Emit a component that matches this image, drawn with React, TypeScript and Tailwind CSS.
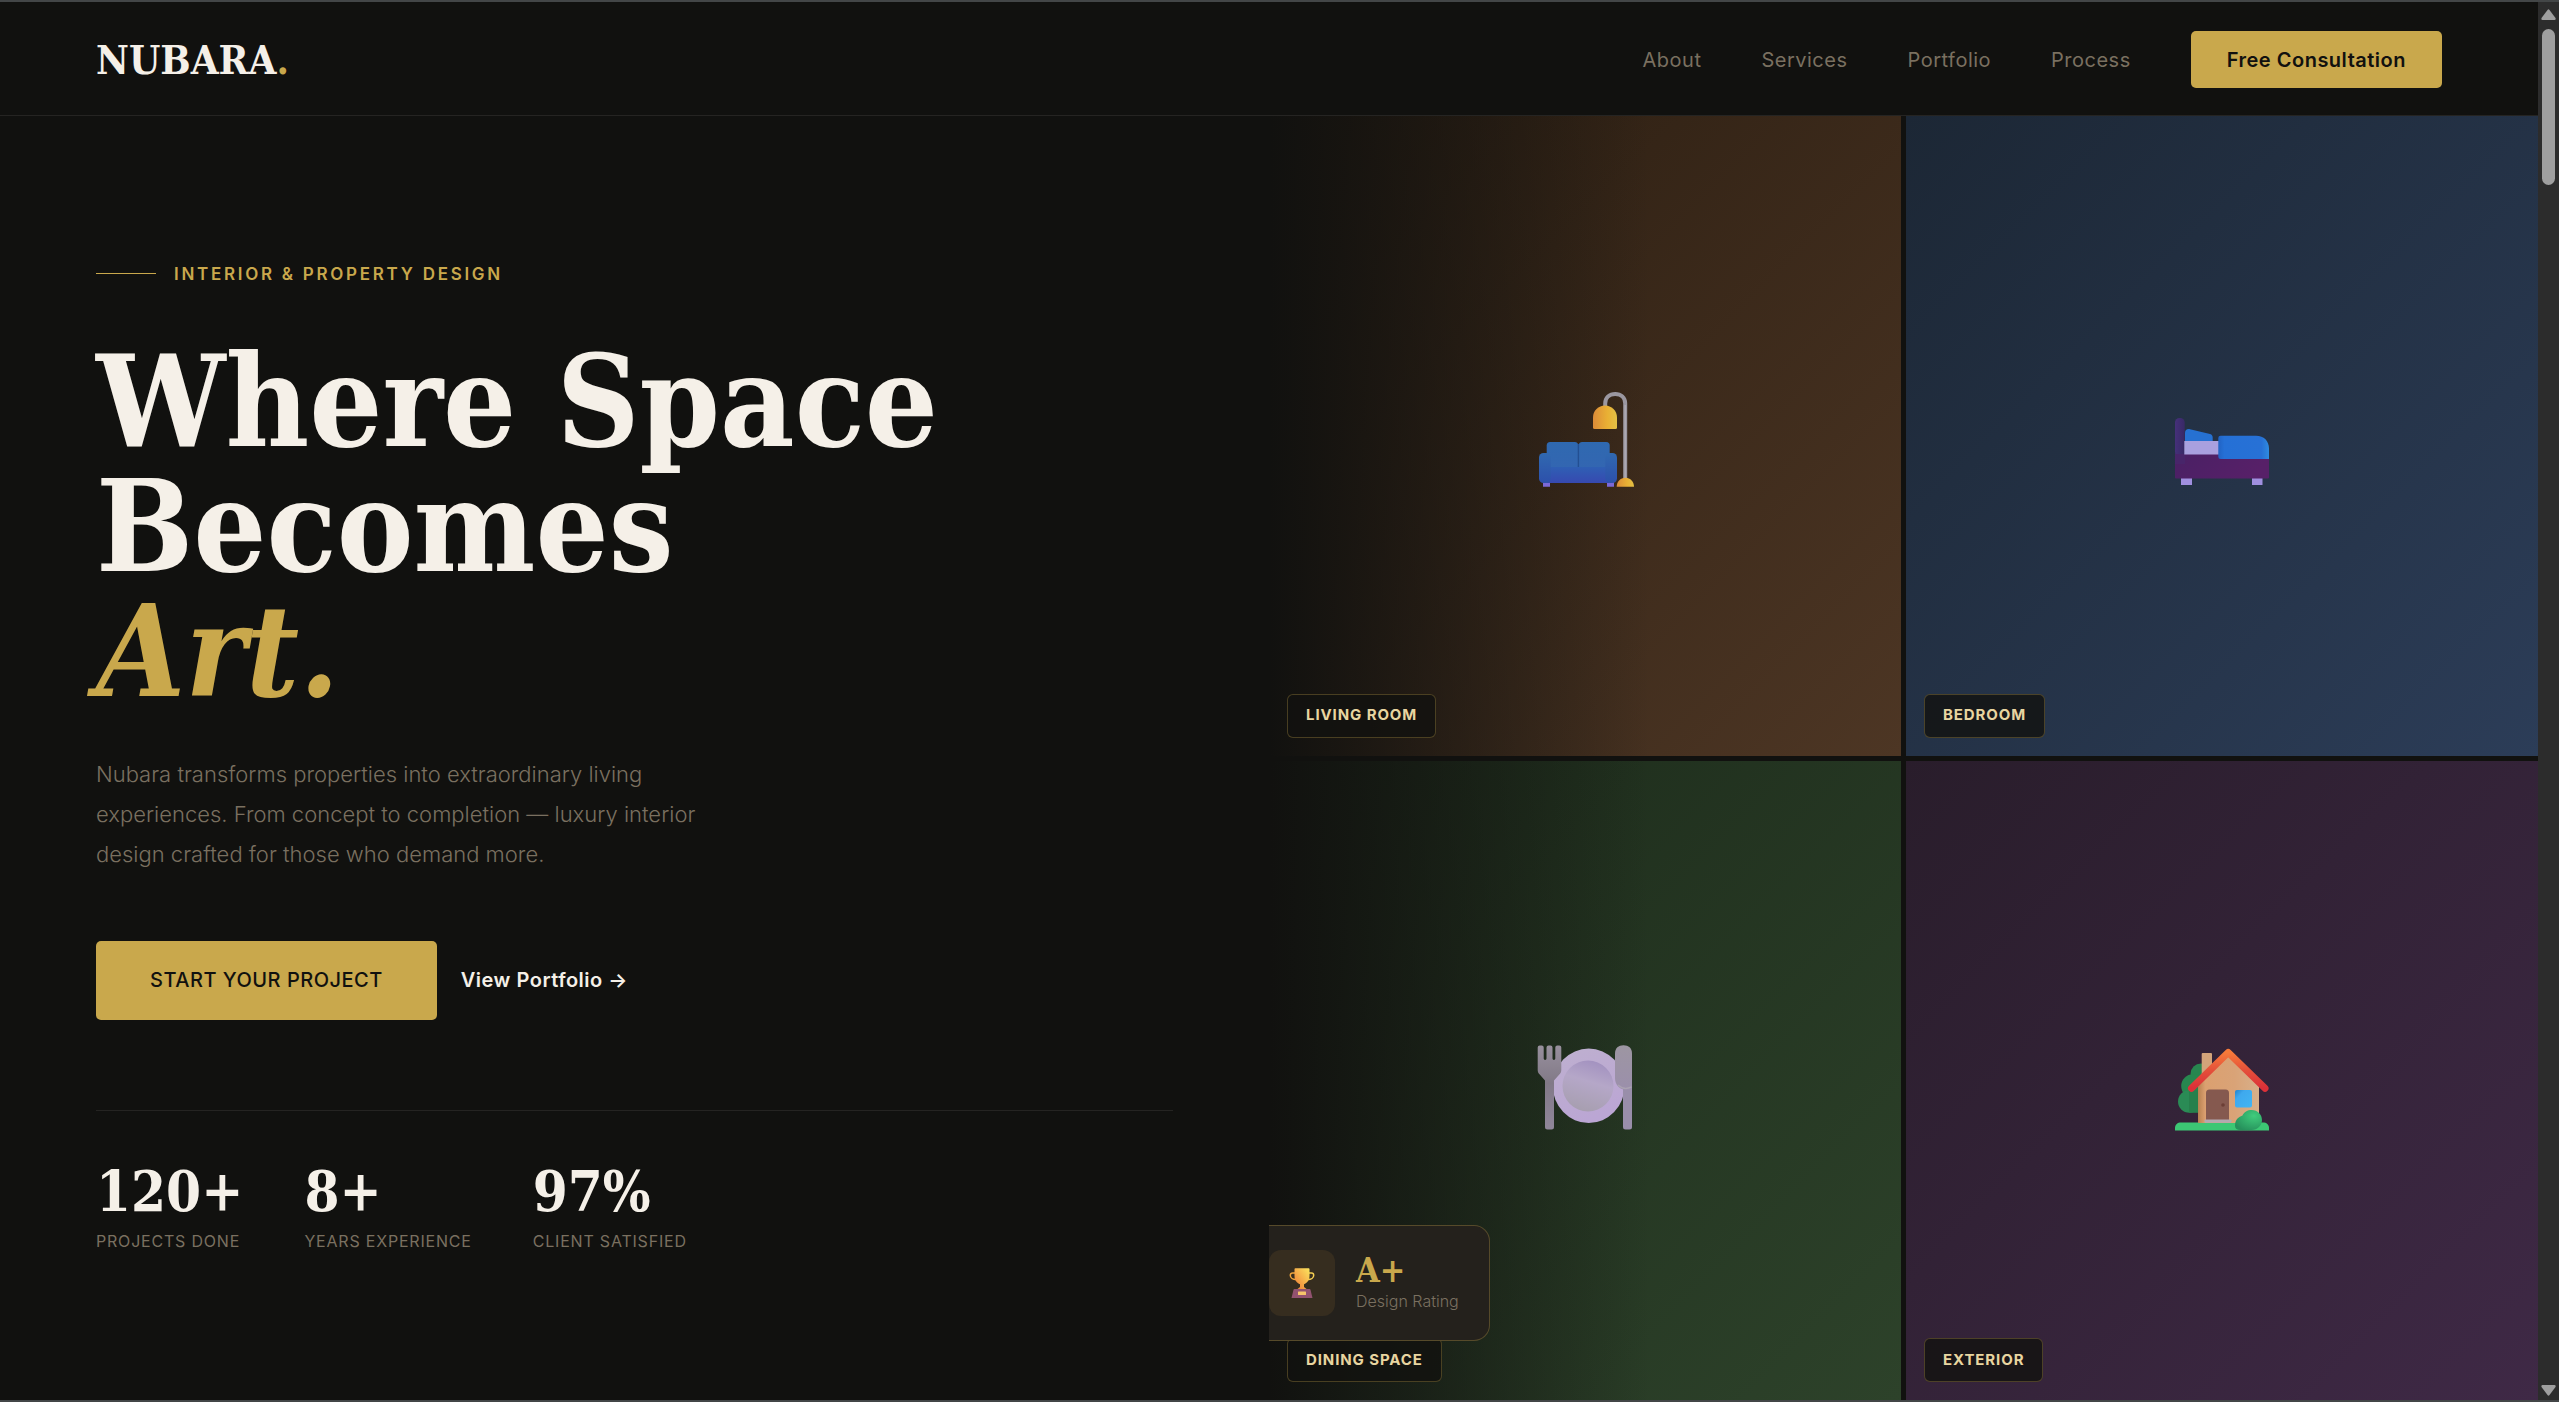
import React from 'react';

const navLinks = ['About', 'Services', 'Portfolio', 'Process'];

const stats = [
  { value: '120+', label: 'Projects Done' },
  { value: '8+', label: 'Years Experience' },
  { value: '97%', label: 'Client Satisfied' },
];

const SofaIcon: React.FC = () => (
  <svg viewBox="0 0 96 96" className="w-24 h-24 overflow-visible" aria-hidden="true">
    <defs>
      <linearGradient id="sofa-back" x1="0" y1="0" x2="0" y2="1">
        <stop offset="0" stopColor="#2f69b0" />
        <stop offset="1" stopColor="#3465b2" />
      </linearGradient>
      <linearGradient id="sofa-seat" x1="0" y1="0" x2="0" y2="1">
        <stop offset="0" stopColor="#2f5fb4" />
        <stop offset="1" stopColor="#3749b0" />
      </linearGradient>
      <linearGradient id="sofa-arm" x1="0" y1="0" x2="0" y2="1">
        <stop offset="0" stopColor="#3069b0" />
        <stop offset="1" stopColor="#2d50ab" />
      </linearGradient>
      <linearGradient id="lamp" x1="0" y1="0" x2="1" y2="0">
        <stop offset="0" stopColor="#dc8b38" />
        <stop offset="0.6" stopColor="#e9b034" />
        <stop offset="1" stopColor="#e4c045" />
      </linearGradient>
    </defs>
    <path d="M68.2 15V11.5C68.2 5.5 72.5 2 78.2 2S88.2 5.5 88.2 11.5V88" fill="none" stroke="#9b97a0" strokeWidth="4" />
    <path d="M88.2 13V87" stroke="#b1adb6" strokeWidth="1.2" />
    <path d="M56 25.5a12 12 0 0 1 24 0V35.5a1.5 1.5 0 0 1-1.5 1.5H57.5a1.5 1.5 0 0 1-1.5-1.5Z" fill="url(#lamp)" />
    <path d="M79.7 94.7c0-5 3.500-9 8.700-9s8.600 4 8.600 9Z" fill="url(#lamp)" />
    <path d="M6 90h7v4.700H6ZM70 90h7v4.700H70Z" fill="#7b68d8" />
    <rect x="9.700" y="50" width="31.500" height="34" rx="3.500" fill="url(#sofa-back)" />
    <rect x="41.700" y="50" width="31" height="34" rx="3.500" fill="url(#sofa-back)" />
    <path d="M41.400 52V75" stroke="#234f92" strokeWidth="1.400" />
    <rect x="10" y="75" width="62" height="16" fill="url(#sofa-seat)" />
    <rect x="2" y="61" width="11.700" height="30" rx="4.500" fill="url(#sofa-arm)" />
    <rect x="68.300" y="61" width="11.700" height="30" rx="4.500" fill="url(#sofa-arm)" />
  </svg>
);

const BedIcon: React.FC = () => (
  <svg viewBox="0 0 96 96" className="w-24 h-24 overflow-visible" aria-hidden="true">
    <defs>
      <linearGradient id="bed-base" x1="0" y1="0" x2="1" y2="0.25">
        <stop offset="0" stopColor="#4c2a6a" />
        <stop offset="0.1" stopColor="#4b2065" />
        <stop offset="1" stopColor="#572068" />
      </linearGradient>
      <linearGradient id="bed-head" x1="0" y1="0" x2="1" y2="0">
        <stop offset="0" stopColor="#45307a" />
        <stop offset="1" stopColor="#382966" />
      </linearGradient>
      <linearGradient id="bed-blanket" x1="0" y1="0" x2="1" y2="0">
        <stop offset="0" stopColor="#2163c4" />
        <stop offset="0.12" stopColor="#2570d6" />
        <stop offset="0.85" stopColor="#2771d6" />
        <stop offset="1" stopColor="#2f8be0" />
      </linearGradient>
    </defs>
    <path d="M7 85h11v8H7ZM78 85h10.500v8H78Z" fill="#a08fe0" />
    <path d="M11 49V41c0-3 2-4.500 5-3.800L36 42c2 .6 2.700 2 2.700 4v4Z" fill="#2671d2" />
    <rect x="1" y="61" width="94" height="25.500" rx="1" fill="url(#bed-base)" />
    <rect x="1" y="26" width="9.700" height="38" rx="4.500" fill="url(#bed-head)" />
    <path d="M1 62h10v10H1Z" fill="#48256a" />
    <rect x="10.300" y="49" width="36" height="13.500" fill="#a9a0df" />
    <path d="M44.300 46a2.300 2.300 0 0 1 2.300-2.300H82C90 43.700 95 49 95 56.500V67H46.600a2.300 2.300 0 0 1-2.300-2.300Z" fill="url(#bed-blanket)" />
  </svg>
);

const PlateIcon: React.FC = () => (
  <svg viewBox="0 0 96 96" className="w-24 h-24 overflow-visible" aria-hidden="true">
    <defs>
      <linearGradient id="plate-rim" x1="0" y1="0" x2="0.4" y2="1">
        <stop offset="0" stopColor="#beb0cf" />
        <stop offset="1" stopColor="#bba6d4" />
      </linearGradient>
      <linearGradient id="plate-well" x1="0.6" y1="0" x2="0.3" y2="1">
        <stop offset="0" stopColor="#a392c0" />
        <stop offset="0.4" stopColor="#b5a7c8" />
        <stop offset="1" stopColor="#a69eae" />
      </linearGradient>
      <linearGradient id="fork" x1="0" y1="0" x2="0" y2="1">
        <stop offset="0" stopColor="#98909d" />
        <stop offset="0.45" stopColor="#817987" />
        <stop offset="1" stopColor="#90869a" />
      </linearGradient>
      <linearGradient id="knife" x1="0" y1="0" x2="0" y2="1">
        <stop offset="0" stopColor="#9d96a2" />
        <stop offset="1" stopColor="#9b8fab" />
      </linearGradient>
    </defs>
    <ellipse cx="51.700" cy="49.800" rx="36" ry="37.200" fill="url(#plate-rim)" />
    <circle cx="51" cy="50" r="25.500" fill="url(#plate-well)" />
    <path d="M.7 11.500a2 2 0 0 1 2-2h2a2 2 0 0 1 2 2V22.500a1.400 1.400 0 0 0 2.800 0V11.500a2 2 0 0 1 2-2h2a2 2 0 0 1 2 2V22.500a1.400 1.400 0 0 0 2.800 0V11.500a2 2 0 0 1 2-2h2a2 2 0 0 1 2 2V34c0 2-.6 3-2 4.500L17 44.500V91a2.500 2.500 0 0 1-2.500 2.500h-4A2.500 2.500 0 0 1 8 91V44.500L2.700 38.500C1.300 37 .7 36 .7 34Z" fill="url(#fork)" />
    <rect x="86" y="40" width="9" height="53.500" rx="2.500" fill="#998eaa" />
    <path d="M78 17.500C78 12 81.500 9.200 86.500 9.200S95 12 95 17.500V50c0 2.500-2 4-4.500 4C83 54 78 49.500 78 42Z" fill="url(#knife)" />
    <path d="M81 49c3 3 8 4.500 13.500 2" fill="none" stroke="#aaa2b2" strokeWidth="1.500" />
  </svg>
);

const HouseIcon: React.FC = () => (
  <svg viewBox="0 0 96 96" className="w-24 h-24 overflow-visible" aria-hidden="true">
    <defs>
      <linearGradient id="house-wall" x1="0" y1="0" x2="1" y2="0">
        <stop offset="0" stopColor="#b88150" />
        <stop offset="0.12" stopColor="#dba070" />
        <stop offset="0.6" stopColor="#d9a377" />
        <stop offset="1" stopColor="#d8b08a" />
      </linearGradient>
      <linearGradient id="house-roof" x1="0" y1="0" x2="0" y2="1">
        <stop offset="0" stopColor="#f77a3a" />
        <stop offset="0.5" stopColor="#e4503a" />
        <stop offset="1" stopColor="#dc3038" />
      </linearGradient>
      <linearGradient id="house-window" x1="0" y1="0" x2="1" y2="1">
        <stop offset="0" stopColor="#2383cb" />
        <stop offset="0.3" stopColor="#3fa9ee" />
        <stop offset="1" stopColor="#43b5f3" />
      </linearGradient>
      <radialGradient id="house-bush" cx="0.7" cy="0.3" r="0.8">
        <stop offset="0" stopColor="#40cc7c" />
        <stop offset="1" stopColor="#26905b" />
      </radialGradient>
    </defs>
    <circle cx="27" cy="38" r="10.500" fill="#27864f" />
    <circle cx="19" cy="50" r="11.800" fill="#27874f" />
    <circle cx="15.300" cy="65.500" r="11.300" fill="#2a8b55" />
    <path d="M15 54h12v22.800H15Z" fill="#26804c" />
    <rect x="27.700" y="17" width="10.300" height="26" rx="1" fill="#d3a47a" />
    <path d="M1 94.500V92c0-3.500 2.500-5.500 6-5.500H89c3.500 0 6 2 6 5.500v2.500Z" fill="#3cc774" />
    <path d="M24 48 54 18 85 48V87H24Z" fill="url(#house-wall)" />
    <path d="M17.500 52.200 54.200 16.500 91 52.200" fill="none" stroke="url(#house-roof)" strokeWidth="7" strokeLinecap="round" strokeLinejoin="round" />
    <path d="M32 57a3.500 3.500 0 0 1 3.500-3.500h16A3.500 3.500 0 0 1 55 57V85H32Z" fill="#85594f" />
    <circle cx="49" cy="69" r="1.800" fill="#6c3e35" />
    <rect x="30.500" y="83.500" width="27" height="3.300" rx="1" fill="#b3a9b1" />
    <rect x="61" y="54" width="17" height="17.500" rx="2" fill="url(#house-window)" />
    <path d="M61 90c0-6 3-9 7.500-10.500C70 76 73.500 74 77.700 74 83.500 74 88 78.500 88 84s-4.500 10-10.300 10H66c-3 0-5-1.500-5-4Z" fill="url(#house-bush)" />
  </svg>
);

const TrophyIcon: React.FC = () => (
  <svg viewBox="0 0 26 30" className="w-[26px] h-[30px]" aria-hidden="true">
    <defs>
      <linearGradient id="cup" x1="0.9" y1="0" x2="0.1" y2="0.8">
        <stop offset="0" stopColor="#fbe05c" />
        <stop offset="1" stopColor="#f28a3c" />
      </linearGradient>
    </defs>
    <path d="M6 5H3.500A2.200 2.200 0 0 0 1.300 7.200C1.300 10 4 11.500 7 11.500" fill="none" stroke="#f0a43c" strokeWidth="1.500" />
    <path d="M20 5h2.500a2.200 2.200 0 0 1 2.200 2.200C24.700 10 22 11.500 19 11.500" fill="none" stroke="#f6cf52" strokeWidth="1.500" />
    <path d="M5.500 1A.8.800 0 0 1 6.300.3H19.700a.8.800 0 0 1 .8.700V8c0 4.500-2.500 7-5.500 8.300V19l2.500 2H8.500L11 19V16.300C8 15 5.500 12.500 5.500 8Z" fill="url(#cup)" />
    <path d="M5.500 21h15a1 1 0 0 1 1 .8L23.500 30H2.500L4.500 21.800a1 1 0 0 1 1-.8Z" fill="#92526f" />
    <rect x="9" y="23.500" width="8" height="3.500" rx=".5" fill="#f6c46a" />
  </svg>
);

const rooms = [
  { name: 'Living Room', icon: <SofaIcon />, bg: 'bg-linear-135 from-[#2a1d11] to-[#4d3624]' },
  { name: 'Bedroom', icon: <BedIcon />, bg: 'bg-linear-135 from-[#1c2735] to-[#2c3d58]' },
  { name: 'Dining Space', icon: <PlateIcon />, bg: 'bg-linear-135 from-[#1c2a1a] to-[#2d422a]' },
  { name: 'Exterior', icon: <HouseIcon />, bg: 'bg-linear-135 from-[#291d2b] to-[#3f2946]' },
];

const Header: React.FC = () => (
  <header className="flex items-center justify-between px-24 pt-0.5 h-[114px] border-b border-[#252422]">
    <a href="#" className="font-['DejaVu_Serif_Condensed','DejaVu_Serif',serif] font-bold text-[40px] leading-none text-[#f5f0e8]">
      NUBARA<span className="text-[#c9a84c]">.</span>
    </a>
    <nav className="flex items-center gap-[60px] text-[20px] tracking-wide text-[#7a7060]">
      {navLinks.map((link) => (
        <a key={link} href="#">{link}</a>
      ))}
      <a href="#" className="flex items-center h-[57px] px-9 rounded-[5px] bg-[#c9a84c] text-[#11110f] font-semibold">
        Free Consultation
      </a>
    </nav>
  </header>
);

const HeroCopy: React.FC = () => (
  <section className="flex flex-col justify-center px-24 pb-0.5">
    <div className="flex items-center gap-[18px] leading-[26px]">
      <span className="w-[60px] h-px bg-[#c9a84c]" />
      <span className="text-[17px] font-semibold tracking-[0.16em] uppercase text-[#c9a84c]">
        Interior &amp; Property Design
      </span>
    </div>
    <h1 className="mt-[52px] font-['DejaVu_Serif_Condensed','DejaVu_Serif',serif] font-bold text-[128px] leading-[125px] text-[#f5f0e8]">
      Where Space
      <br />
      Becomes
      <br />
      <em className="text-[#c9a84c]">Art.</em>
    </h1>
    <p className="mt-10 max-w-[640px] text-[22px] leading-[40px] font-light text-[#7a7060]">
      Nubara transforms properties into extraordinary living experiences. From concept to completion — luxury interior design crafted for those who demand more.
    </p>
    <div className="mt-[67px] flex items-center gap-6 text-[20px] tracking-wide">
      <button className="h-[79px] px-[54px] rounded-[5px] bg-[#c9a84c] text-[#11110f] font-medium uppercase tracking-wide">
        Start Your Project
      </button>
      <a href="#" className="font-semibold text-[#f5f0e8]">View Portfolio →</a>
    </div>
    <dl className="mt-[90px] pt-[50px] border-t border-[#252422] flex gap-[61px]">
      {stats.map((stat) => (
        <div key={stat.label} className="flex flex-col-reverse">
          <dt className="mt-[7px] text-[16px] leading-[26px] tracking-wider uppercase text-[#7a7060]">{stat.label}</dt>
          <dd className="font-['DejaVu_Serif_Condensed','DejaVu_Serif',serif] font-bold text-[56px] leading-[60px] text-[#f5f0e8]">{stat.value}</dd>
        </div>
      ))}
    </dl>
  </section>
);

const RoomGrid: React.FC = () => (
  <section className="relative overflow-hidden grid grid-cols-2 grid-rows-2 gap-[5px]">
    {rooms.map((room) => (
      <div key={room.name} className={`relative flex items-center justify-center pt-2 ${room.bg}`}>
        <div className="relative z-10">{room.icon}</div>
        <span className="absolute z-10 left-[18px] bottom-[18px] h-11 px-[18px] flex items-center rounded-md border border-[#c9a84c]/30 bg-[#11110f]/80 text-[15px] font-bold tracking-[0.06em] uppercase text-[#e8d5a0]">
          {room.name}
        </span>
      </div>
    ))}

    {/* Fade into the copy column */}
    <div className="absolute inset-y-0 left-0 w-[30%] bg-linear-to-r from-[#11110f] to-transparent" />

    {/* Rating card */}
    <div className="absolute z-20 -left-[31px] bottom-[59px] flex items-center gap-[21px] h-[116px] px-[30px] rounded-2xl border border-[#c9a84c]/30 bg-[#24211c]">
      <div className="flex items-center justify-center w-[66px] h-[66px] rounded-xl bg-[#362d1f]">
        <TrophyIcon />
      </div>
      <div>
        <div className="font-['DejaVu_Serif_Condensed','DejaVu_Serif',serif] font-bold text-[34px] leading-[36px] text-[#c9a84c]">A+</div>
        <div className="text-[16px] leading-[26px] font-light text-[#7a7060]">Design Rating</div>
      </div>
    </div>
  </section>
);

const Scrollbar: React.FC = () => (
  <div className="w-[21px] flex flex-col items-center bg-[#2c2c2c] text-[#9f9f9f] pt-[7px] pb-1" aria-hidden="true">
    <svg viewBox="0 0 15 11" className="w-[15px] h-[11px]">
      <path d="M6.500 1Q7.500-.3 8.500 1L14.500 9Q15 11 13.500 11H1.500Q0 11 .5 9Z" fill="currentColor" />
    </svg>
    <div className="mt-[9px] w-[13px] h-[156px] rounded-full bg-[#9f9f9f]" />
    <svg viewBox="0 0 15 11" className="w-[15px] h-[11px] mt-auto">
      <path d="M6.500 10Q7.500 11.300 8.500 10L14.500 2Q15 0 13.500 0H1.500Q0 0 .5 2Z" fill="currentColor" />
    </svg>
  </div>
);

const App: React.FC = () => {
  return (
    <div className="min-h-screen flex border-y-2 border-[#434647] bg-[#11110f] font-['Inter',sans-serif]">
      <div className="flex-1 flex flex-col">
        <Header />
        <main className="flex-1 grid grid-cols-2">
          <HeroCopy />
          <RoomGrid />
        </main>
      </div>
      <Scrollbar />
    </div>
  );
};

export default App;
